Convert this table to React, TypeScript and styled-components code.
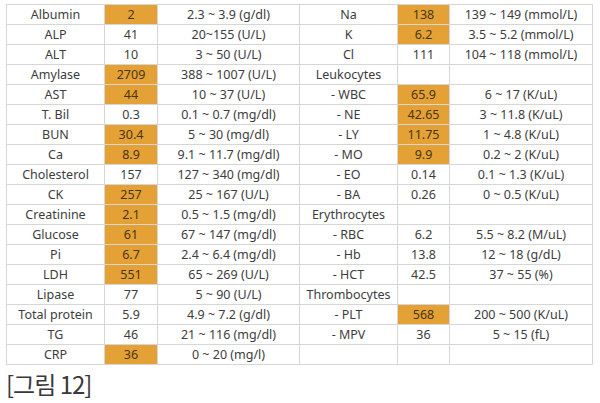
import { createGlobalStyle, styled } from 'styled-components'

const GlobalStyle = createGlobalStyle`
  html, body {
    margin: 0;
    padding: 0;
    background: #ffffff;
  }
  body {
    font-family: "Noto Sans", "Noto Sans CJK KR", sans-serif;
    color: #3a3a3a;
  }
`

const Page = styled.div`
  display: flex;
  flex-direction: column;
  padding: 4px 0 0 6px;
  width: 600px;
  height: 403px;
  box-sizing: border-box;
`

const Table = styled.table`
  border-collapse: collapse;
  table-layout: fixed;
  width: 586px;
  border: 1px solid #bfbfbf;
`

const Col = styled.col<{ $w: number }>`
  width: ${(p) => p.$w}px;
`

const Cell = styled.td<{ $high?: boolean }>`
  height: 19px;
  padding: 0;
  border: 1px solid #d6d6d6;
  text-align: center;
  font-size: 12.5px;
  line-height: 19px;
  white-space: nowrap;
  overflow: hidden;
  background: ${(p) => (p.$high ? '#e4a135' : 'transparent')};
  color: ${(p) => (p.$high ? '#4a3513' : '#3d3d3d')};
`

const Caption = styled.div`
  margin-top: 4px;
  font-family: "Noto Sans CJK KR", sans-serif;
  font-weight: 400;
  font-size: 24px;
  line-height: 30px;
  color: #3a3a3a;
  letter-spacing: -1px;
`

type Item = [string, string, string, boolean]

const widths = [98, 53, 142, 98, 52, 143]

const left: Item[] = [
  ['Albumin', '2', '2.3 ~ 3.9 (g/dl)', true],
  ['ALP', '41', '20~155 (U/L)', false],
  ['ALT', '10', '3 ~ 50 (U/L)', false],
  ['Amylase', '2709', '388 ~ 1007 (U/L)', true],
  ['AST', '44', '10 ~ 37 (U/L)', true],
  ['T. Bil', '0.3', '0.1 ~ 0.7 (mg/dl)', false],
  ['BUN', '30.4', '5 ~ 30 (mg/dl)', true],
  ['Ca', '8.9', '9.1 ~ 11.7 (mg/dl)', true],
  ['Cholesterol', '157', '127 ~ 340 (mg/dl)', false],
  ['CK', '257', '25 ~ 167 (U/L)', true],
  ['Creatinine', '2.1', '0.5 ~ 1.5 (mg/dl)', true],
  ['Glucose', '61', '67 ~ 147 (mg/dl)', true],
  ['Pi', '6.7', '2.4 ~ 6.4 (mg/dl)', true],
  ['LDH', '551', '65 ~ 269 (U/L)', true],
  ['Lipase', '77', '5 ~ 90 (U/L)', false],
  ['Total protein', '5.9', '4.9 ~ 7.2 (g/dl)', false],
  ['TG', '46', '21 ~ 116 (mg/dl)', false],
  ['CRP', '36', '0 ~ 20 (mg/l)', true],
]

const right: Item[] = [
  ['Na', '138', '139 ~ 149 (mmol/L)', true],
  ['K', '6.2', '3.5 ~ 5.2 (mmol/L)', true],
  ['Cl', '111', '104 ~ 118 (mmol/L)', false],
  ['Leukocytes', '', '', false],
  ['- WBC', '65.9', '6 ~ 17 (K/uL)', true],
  ['- NE', '42.65', '3 ~ 11.8 (K/uL)', true],
  ['- LY', '11.75', '1 ~ 4.8 (K/uL)', true],
  ['- MO', '9.9', '0.2 ~ 2 (K/uL)', true],
  ['- EO', '0.14', '0.1 ~ 1.3 (K/uL)', false],
  ['- BA', '0.26', '0 ~ 0.5 (K/uL)', false],
  ['Erythrocytes', '', '', false],
  ['- RBC', '6.2', '5.5 ~ 8.2 (M/uL)', false],
  ['- Hb', '13.8', '12 ~ 18 (g/dL)', false],
  ['- HCT', '42.5', '37 ~ 55 (%)', false],
  ['Thrombocytes', '', '', false],
  ['- PLT', '568', '200 ~ 500 (K/uL)', true],
  ['- MPV', '36', '5 ~ 15 (fL)', false],
  ['', '', '', false],
]

const App = () => {
  return (
    <Page>
      <GlobalStyle />
      <Table>
        <colgroup>
          {widths.map((w, i) => (
            <Col key={i} $w={w} />
          ))}
        </colgroup>
        <tbody>
          {left.map((l, i) => {
            const r = right[i]
            return (
              <tr key={i}>
                <Cell>{l[0]}</Cell>
                <Cell $high={l[3]}>{l[1]}</Cell>
                <Cell>{l[2]}</Cell>
                <Cell>{r[0]}</Cell>
                <Cell $high={r[3]}>{r[1]}</Cell>
                <Cell>{r[2]}</Cell>
              </tr>
            )
          })}
        </tbody>
      </Table>
      <Caption>[그림 12]</Caption>
    </Page>
  )
}

export default App
